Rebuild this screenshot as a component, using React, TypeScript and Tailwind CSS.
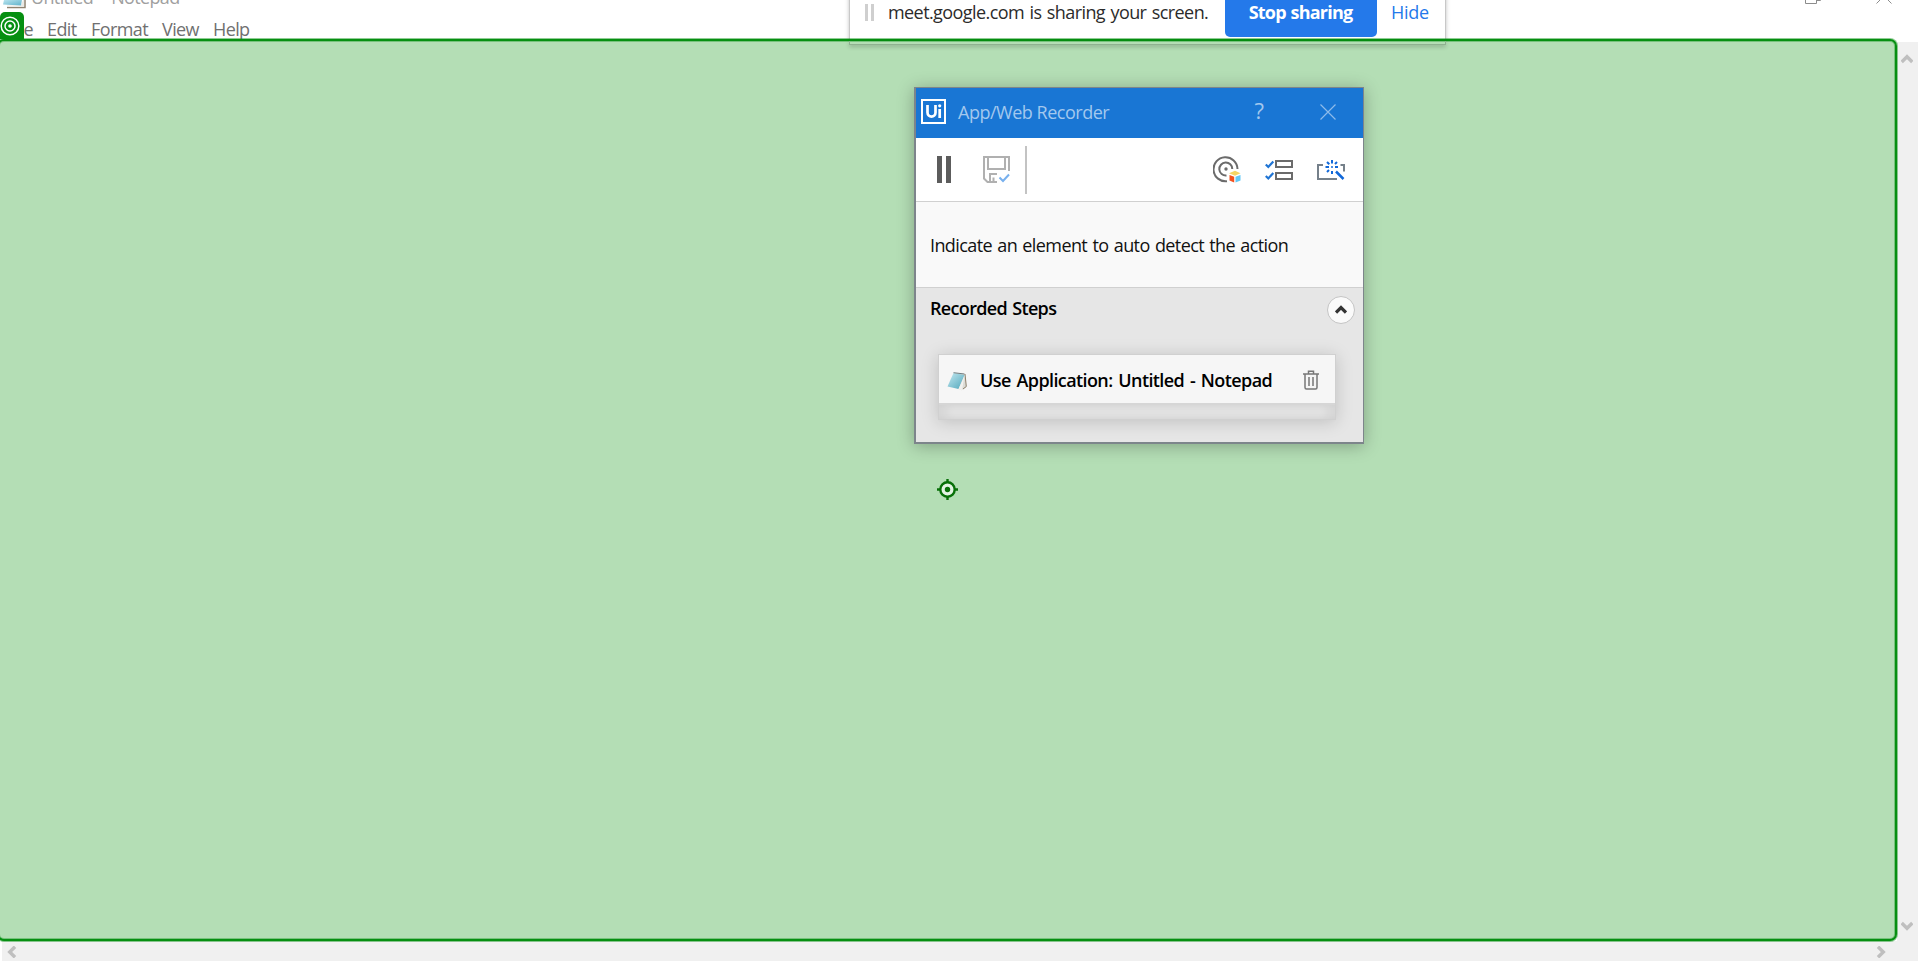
import React from 'react';

type ChevronProps = { d: string; className: string };

function Chevron({ d, className }: ChevronProps) {
  return (
    <svg viewBox="0 0 12 12" className={className} fill="none" stroke="#bfbfbf" strokeWidth="3.400">
      <path d={d} />
    </svg>
  );
}

function NotepadIcon({ className }: { className: string }) {
  return (
    <svg viewBox="0 0 20 20" className={className}>
      <defs>
        <linearGradient id="page" x1="0" y1="0" x2="1" y2="1">
          <stop offset="0" stopColor="#c5e9f1" />
          <stop offset="1" stopColor="#4fa6bb" />
        </linearGradient>
      </defs>
      <path d="M7.500 2 L18 3 L19.500 16 L14.500 19.300 L10 17.500 Z" fill="#dcdcd6" />
      <path d="M18 3 L19.300 15.500 L16 18" fill="none" stroke="#8b7f6b" strokeWidth="1" />
      <path d="M6.500 2 L17.500 4 L11.500 18 L0.500 15.500 Z" fill="url(#page)" />
      <path d="M6.500 1.700 L17.500 3" stroke="#6e7c80" strokeWidth="1" />
      <path d="M17.500 4.500 L11.500 18 L15 19.500 Z" fill="#f1f1ee" />
    </svg>
  );
}

function WindowIcon() {
  return (
    <svg viewBox="0 0 24 9" className="h-[9px] w-6 shrink-0">
      <defs>
        <linearGradient id="sheet" x1="0" y1="0" x2="1" y2="1">
          <stop offset="0" stopColor="#b9e3ee" />
          <stop offset="1" stopColor="#5fb3cb" />
        </linearGradient>
      </defs>
      <path d="M5 7.500h18V0" fill="none" stroke="#8f8270" strokeWidth="1.500" />
      <path d="M5 5.500h14l2-5.500h1v7H5z" fill="#e9e9e4" />
      <path d="M2 0h18l-1 5.500L1 4.500z" fill="url(#sheet)" />
    </svg>
  );
}

function TitleBar() {
  return (
    <div className="flex h-[50px] shrink-0 items-center bg-[#1976d4] pb-[3px] pl-[5px] pr-[27px] text-[#a3c8ee]">
      <svg viewBox="0 0 25 25" className="h-[25px] w-[25px] shrink-0" fill="none" stroke="#fff">
        <rect x="1" y="1" width="23" height="23" strokeWidth="2" />
        <path d="M6.500 6v7.500c0 5.500 8 5.500 8 0V6" strokeWidth="2.700" />
        <path d="M18.700 10v9" strokeWidth="2.700" />
        <circle cx="18.700" cy="6.800" r="1.600" fill="#fff" stroke="none" />
      </svg>
      <span className="ml-[12px] text-[18px] leading-[24px] tracking-[-0.48px]">App/Web Recorder</span>
      <span className="ml-auto mt-[-3px] text-[22px] leading-[24px]">?</span>
      <svg viewBox="0 0 16 16" className="ml-[56px] h-4 w-4" stroke="#8dbbea" strokeWidth="1.200">
        <path d="M0.500 0.500 15.500 15.500M15.500 0.500 0.500 15.500" />
      </svg>
    </div>
  );
}

function Toolbar() {
  return (
    <div className="flex h-[63px] shrink-0 items-center bg-white pl-[21px] pr-[18px]">
      <div className="flex gap-[4px]">
        <div className="h-[27px] w-[5px] bg-[#5c5c5c]" />
        <div className="h-[27px] w-[5px] bg-[#5c5c5c]" />
      </div>
      <svg viewBox="0 0 27 27" className="ml-[32px] h-[27px] w-[27px]" fill="none" stroke="#b0b0b0" strokeWidth="2">
        <path d="M26 15V1H1v21.500L4.500 26H14" />
        <path d="M5 1v12h17V1" />
        <path d="M7 26v-8h7M10.500 26v-4.500" />
        <path d="M16.500 21.500l3.500 3.500 6-6.500" stroke="#77b0ee" />
      </svg>
      <div className="ml-[15px] h-[48px] w-[2px] bg-[#c3c3c3]" />
      <svg viewBox="0 0 28 27" className="ml-auto h-[27px] w-[28px]" fill="none" stroke="#6b6b6b" strokeWidth="2">
        <path d="M14 25.200A12 12 0 1 1 24.500 13" />
        <path d="M13.500 19.500A6.500 6.500 0 1 1 19.300 13" />
        <circle cx="13" cy="13" r="1.700" fill="#6b6b6b" stroke="none" />
        <g stroke="none">
          <path d="M16 17.300l6-2.500 5.500 2.500-5.500 2.500z" fill="#f5d564" />
          <path d="M16.500 19l4.700 1.800v5.700l-4.700-2z" fill="#f4511e" />
          <path d="M27.500 19l-5 1.800v5.700l5-2z" fill="#64c8f5" />
        </g>
      </svg>
      <svg viewBox="0 0 28 22" className="ml-[24px] h-[22px] w-[28px]" fill="none" strokeWidth="2">
        <path d="M0.800 5.500l2.500 2.500 5-5.500M0.800 17l2.500 2.500 5-5.500" stroke="#1f74d4" strokeWidth="2.200" />
        <rect x="11" y="2" width="16" height="6" stroke="#6b6b6b" />
        <rect x="11" y="14" width="16" height="6" stroke="#6b6b6b" />
      </svg>
      <svg viewBox="0 0 28 22" className="ml-[24px] h-[22px] w-[28px]" fill="none" strokeWidth="2">
        <path d="M6 6H1v14h19M23.500 6H27v6.500" stroke="#75808a" />
        <path d="M15 1v3.500M15 12v3M8.500 8H12M18 8h3M10 3l2.300 2.300M20 3l-2 2M10 13l2-2" stroke="#1168d9" />
        <path d="M19 12.500l7.500 7.500" stroke="#1168d9" strokeWidth="2.500" />
        <circle cx="15" cy="8" r="1" fill="#1168d9" stroke="none" />
      </svg>
    </div>
  );
}

function RecorderDialog() {
  return (
    <section className="absolute left-[914px] top-[87px] flex h-[357px] w-[450px] flex-col overflow-visible border-2 border-r border-t border-[#7d858b] bg-[#e6e6e6] shadow-[0_2px_16px_rgba(0,0,0,0.28)]">
      <TitleBar />
      <Toolbar />
      <div className="flex h-[87px] shrink-0 items-center border-y border-[#d0d0d0] bg-[#f9f9f9] pl-[14px]">
        <span className="text-[18px] leading-[24px] tracking-[-0.6px] text-[#111] [word-spacing:1.2px]">Indicate an element to auto detect the action</span>
      </div>
      <div className="flex h-[43px] shrink-0 items-center pl-[14px] pr-[8px]">
        <span className="mt-[-3px] text-[18px] font-semibold leading-[24px] tracking-[-0.65px] text-black [word-spacing:1px]">Recorded Steps</span>
        <div className="ml-auto flex h-[28px] w-[28px] items-center justify-center rounded-full border border-[#c4c4c4] bg-[#fafafa]">
          <svg viewBox="0 0 12 9" className="h-[9px] w-[12px]" fill="none" stroke="#333" strokeWidth="3.200">
            <path d="M1 7.500l5-5 5 5" />
          </svg>
        </div>
      </div>
      <div className="ml-[22px] mt-[23px] h-[66px] w-[398px] border border-[#d0d0d0] bg-[#e3e3e3] shadow-[0_2px_16px_rgba(0,0,0,0.17)]">
        <div className="flex h-[50px] items-center border-b-2 border-[#d6d6d6] bg-[#f6f6f6] pl-[8px] pr-[16px] pt-[2px]">
          <NotepadIcon className="mt-[1px] h-5 w-5 shrink-0" />
          <span className="ml-[13px] whitespace-nowrap text-[18px] font-semibold leading-[24px] tracking-[-0.6px] text-black [word-spacing:1.7px]">Use Application: Untitled - Notepad</span>
          <svg viewBox="0 0 16 20" className="ml-auto h-5 w-4 shrink-0" fill="none" stroke="#777" strokeWidth="1.500">
            <path d="M0 4h16M5.500 4V1.200h5V4M2 4v13.500q0 1.500 1.500 1.500h9q1.500 0 1.500-1.500V4M6 7v9M10 7v9" />
          </svg>
        </div>
        <div className="h-[14px] shadow-[inset_8px_0_8px_rgba(0,0,0,0.05),inset_-8px_0_8px_rgba(0,0,0,0.05)]" />
      </div>
    </section>
  );
}

function SharingBar() {
  return (
    <div className="absolute left-[849px] top-[-12px] flex h-[57px] w-[597px] border border-[#c8c8c8] bg-white shadow-[0_2px_4px_rgba(0,0,0,0.25)]">
      <div className="ml-[15px] mt-[15px] flex h-[17px] gap-[3px]">
        <div className="w-[3px] bg-[#cfcfcf]" />
        <div className="w-[3px] bg-[#cfcfcf]" />
      </div>
      <span className="ml-[14px] mt-[11px] w-[321px] whitespace-nowrap text-[18px] leading-[24px] tracking-[-0.58px] text-[#2b2b2b] [word-spacing:1.3px]">meet.google.com is sharing your screen.</span>
      <div className="ml-[16px] flex h-[48px] w-[152px] justify-center rounded-[5px] bg-[#2479ea] pr-[1px] pt-[11px] text-[18px] font-bold leading-[24px] tracking-[-0.8px] text-white [word-spacing:1px]">Stop sharing</div>
      <span className="ml-[14px] mt-[11px] text-[18px] leading-[24px] tracking-[-0.3px] text-[#2479ea]">Hide</span>
    </div>
  );
}

export default function App() {
  return (
    <div className="relative flex h-[961px] w-[1920px] flex-col overflow-hidden bg-white font-['Open_Sans','Noto_Sans',sans-serif]">
      <header className="h-[39px] shrink-0 text-[18px] leading-[24px]">
        <div className="flex h-[17px] items-start pl-[2px]">
          <WindowIcon />
          <span className="ml-[5px] mt-[-15px] whitespace-pre tracking-[-0.65px] text-[#a0a0a0] [word-spacing:2.500px]">Untitled - Notepad</span>
          <div className="ml-auto flex gap-[55px] pr-[28px]">
            <svg viewBox="0 0 16 16" className="mt-[-12px] h-4 w-4" fill="none" stroke="#8c8c8c">
              <path d="M0.500 4.500h11v11h-11zM3.500 4V0.500h12v12H12" />
            </svg>
            <svg viewBox="0 0 16 16" className="mt-[-12px] h-4 w-4" fill="none" stroke="#8c8c8c">
              <path d="M0.500 0.500l15 15M15.500 0.500l-15 15" />
            </svg>
          </div>
        </div>
        <nav className="flex text-[#707070]">
          <span className="w-[47px] pl-[6px] tracking-[-0.3px]">File</span>
          <span className="w-[44px] tracking-[-0.6px]">Edit</span>
          <span className="w-[71px] tracking-[-0.6px]">Format</span>
          <span className="w-[51px] tracking-[-0.6px]">View</span>
          <span className="tracking-[-0.6px]">Help</span>
        </nav>
      </header>
      <SharingBar />
      <div className="absolute left-0 top-[12px] flex h-[27px] w-[24px] items-center rounded-t-[5px] bg-[#068f11]">
        <svg viewBox="0 0 20 20" className="h-5 w-5" fill="none" stroke="#fff" strokeWidth="1.500">
          <circle cx="10" cy="10" r="8.800" />
          <circle cx="10" cy="10" r="5" />
          <circle cx="10" cy="10" r="1.800" fill="#fff" stroke="none" />
        </svg>
      </div>
      <div className="flex h-[902px] shrink-0">
        <main className="relative z-10 ml-[-3px] w-[1900px] shrink-0 rounded-[7px] border-2 border-[#068f11] bg-[#b4deb5] shadow-[0_0_0_1px_rgba(6,143,17,0.45),inset_0_0_0_1px_rgba(6,143,17,0.35)]">
          <div className="ml-[850px] h-[4px] w-[597px] border-x border-b border-[#8fb190] shadow-[0_2px_4px_rgba(0,0,0,0.2)]" />
        </main>
        <div className="mt-[3px] flex w-[21px] flex-col justify-between bg-[#f0f0f0] pb-[9px] pl-[4px] pt-[11px]">
          <Chevron d="M0.700 9L6 3.700 11.300 9" className="h-3 w-3" />
          <Chevron d="M0.700 3L6 8.300 11.300 3" className="h-3 w-3" />
        </div>
      </div>
      <div className="ml-[2px] flex h-[20px] w-[1916px] items-center justify-between bg-[#f0f0f0] pl-[4px] pr-[31px] pt-[1px]">
        <Chevron d="M9 0.700L3.700 6 9 11.300" className="h-3 w-3" />
        <Chevron d="M3 0.700L8.300 6 3 11.300" className="h-3 w-3" />
      </div>
      <div className="absolute left-0 top-0 z-20">
        <RecorderDialog />
        <svg viewBox="0 0 22 22" className="absolute left-[936px] top-[478px] h-[22px] w-[22px]" fill="none" stroke="#087008" strokeWidth="2.400">
          <circle cx="11.500" cy="11.500" r="7.200" fill="#e3f3e3" />
          <path d="M11.500 1v4M11.500 18v4M1 11.500h4M18 11.500h4" />
          <circle cx="11.500" cy="11.500" r="2.700" fill="#087008" stroke="none" />
        </svg>
      </div>
    </div>
  );
}
